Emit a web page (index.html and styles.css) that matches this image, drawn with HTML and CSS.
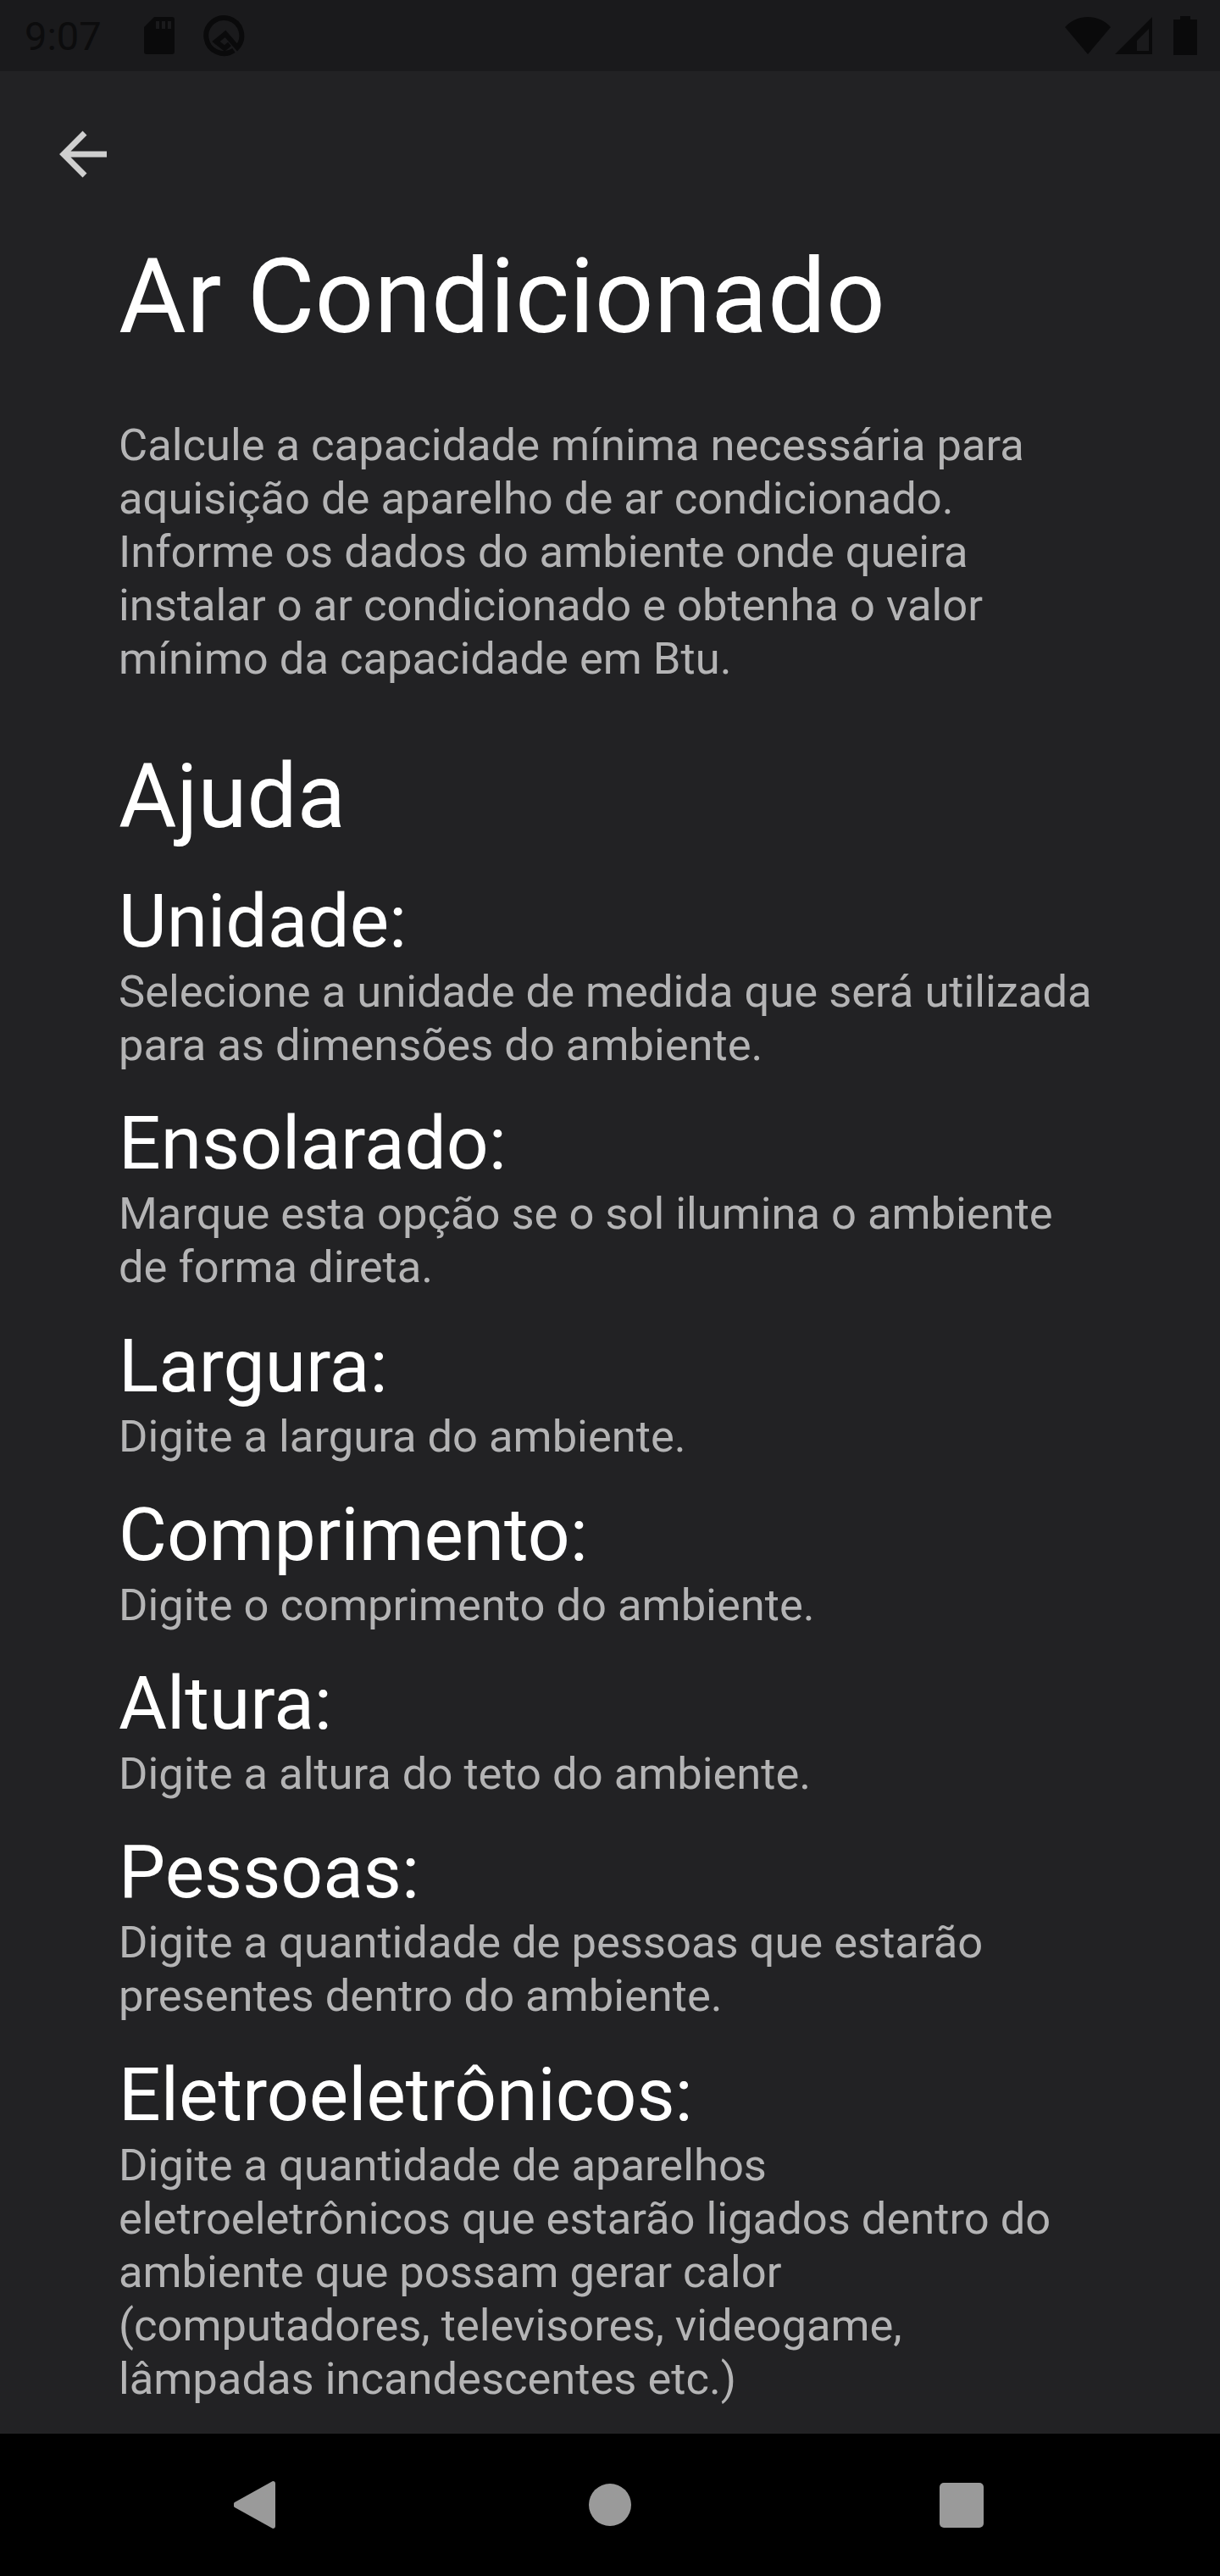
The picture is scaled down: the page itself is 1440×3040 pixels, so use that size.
FILE: index.html
```html
<!DOCTYPE html>
<html lang="pt-BR">
<head>
<meta charset="utf-8">
<title>Ar Condicionado</title>
<link rel="stylesheet" href="styles.css">
</head>
<body>
<div class="screen">
	<div class="status-bar">
		<div class="status-left">
			<span class="clock">9:07</span>
			<svg class="ic-sd" width="36" height="44" viewBox="0 0 36 44"><path d="M12 0H33a3 3 0 0 1 3 3V41a3 3 0 0 1-3 3H3a3 3 0 0 1-3-3V12Z M14 5v9h4V5Z M21 5v9h4V5Z M28 5v9h4V5Z" fill-rule="evenodd"/></svg>
			<svg class="ic-q" width="50" height="50" viewBox="0 0 50 50"><path d="M36 42.500A21 21 0 1 1 40 39L26 23 15 32l10 8 6-5" fill="none" stroke-width="6"/></svg>
		</div>
		<div class="status-right">
			<svg width="54" height="44" viewBox="0 0 54 44"><path d="M0 12C14-4 40-4 54 12L27 44Z"/></svg>
			<svg class="ic-signal" width="44" height="44" viewBox="0 0 44 44"><path d="M44 0V44H0Z M40 14 26 28V40H40Z" fill-rule="evenodd"/></svg>
			<svg class="ic-batt" width="28" height="46" viewBox="0 0 28 46"><path d="M8 0H20V4H28V46H0V4H8Z"/></svg>
		</div>
	</div>

	<div class="content">
		<svg class="back" width="60" height="60" viewBox="0 0 60 60"><path d="M58 30H6 M32 5 7 30 32 55" fill="none" stroke-width="7"/></svg>

		<div class="text">
			<h1>Ar Condicionado</h1>
			<p class="intro">Calcule a capacidade mínima necessária para aquisição de aparelho de ar condicionado.<br>Informe os dados do ambiente onde queira instalar o ar condicionado e obtenha o valor mínimo da capacidade em Btu.</p>

			<h2>Ajuda</h2>

			<h3>Unidade:</h3>
			<p>Selecione a unidade de medida que será utilizada para as dimensões do ambiente.</p>

			<h3>Ensolarado:</h3>
			<p>Marque esta opção se o sol ilumina o ambiente de forma direta.</p>

			<h3>Largura:</h3>
			<p>Digite a largura do ambiente.</p>

			<h3>Comprimento:</h3>
			<p>Digite o comprimento do ambiente.</p>

			<h3>Altura:</h3>
			<p>Digite a altura do teto do ambiente.</p>

			<h3>Pessoas:</h3>
			<p>Digite a quantidade de pessoas que estarão presentes dentro do ambiente.</p>

			<h3>Eletroeletrônicos:</h3>
			<p>Digite a quantidade de aparelhos eletroeletrônicos que estarão ligados dentro do ambiente que possam gerar calor (computadores, televisores, videogame, lâmpadas incandescentes etc.)</p>
		</div>
	</div>

	<div class="nav-bar">
		<svg width="49" height="56" viewBox="0 0 49 56"><path d="M46 0a3 3 0 0 1 3 3V53a3 3 0 0 1-3 3L1 31a4 4 0 0 1 0-6Z"/></svg>
		<div class="nav-home"></div>
		<div class="nav-recent"></div>
	</div>
</div>
</body>
</html>
```

FILE: styles.css
```css
*{
	margin:0;
	padding:0;
	box-sizing:border-box;
}
body{
	background:#222224;
	font-family:Roboto,"Noto Sans",sans-serif;
}
.screen{
	width:1440px;
	height:3040px;
	display:flex;
	flex-direction:column;
	overflow:hidden;
}

/* status bar */
.status-bar{
	height:84px;
	background:#1a1a1c;
	display:flex;
	justify-content:space-between;
	align-items:center;
	padding:0 27px 0 29px;
	flex:none;
}
.status-left,.status-right{
	display:flex;
	align-items:center;
}
.status-bar svg{
	fill:#0a0a0b;
	stroke:#0a0a0b;
	stroke-width:0;
}
.clock{
	font-size:47px;
	color:#0c0c0d;
	width:141px;
}
.ic-q{
	margin-left:34px;
}
.ic-signal{
	margin-left:5px;
}
.ic-batt{
	margin-left:25px;
}

/* content */
.content{
	flex:1;
	min-height:0;
	padding:0 140px;
	position:relative;
	overflow:hidden;
}
.back{
	position:absolute;
	left:68px;
	top:68px;
	stroke:#cfcfcf;
}
.text{
	padding-top:194px;
}
h1{
	font-size:122.5px;
	font-weight:400;
	line-height:144px;
	color:#fff;
	margin-bottom:72px;
}
h2{
	font-size:105px;
	font-weight:400;
	line-height:123px;
	color:#fff;
	margin-top:70px;
	margin-bottom:34px;
}
h3{
	font-size:87.5px;
	font-weight:400;
	line-height:103px;
	color:#fff;
}
p{
	font-size:52.5px;
	line-height:63px;
	color:#b4b4b5;
	margin-bottom:33.3px;
}
.intro{
	margin-bottom:0;
}

/* nav bar */
.nav-bar{
	height:168px;
	background:#000;
	flex:none;
	display:flex;
	align-items:center;
	padding-left:276px;
}
.nav-bar svg{
	fill:#9a9a9a;
}
.nav-home{
	width:50px;
	height:50px;
	border-radius:50%;
	background:#9a9a9a;
	margin-left:370px;
}
.nav-recent{
	width:52px;
	height:53px;
	border-radius:5px;
	background:#9a9a9a;
	margin-left:364px;
}
```
